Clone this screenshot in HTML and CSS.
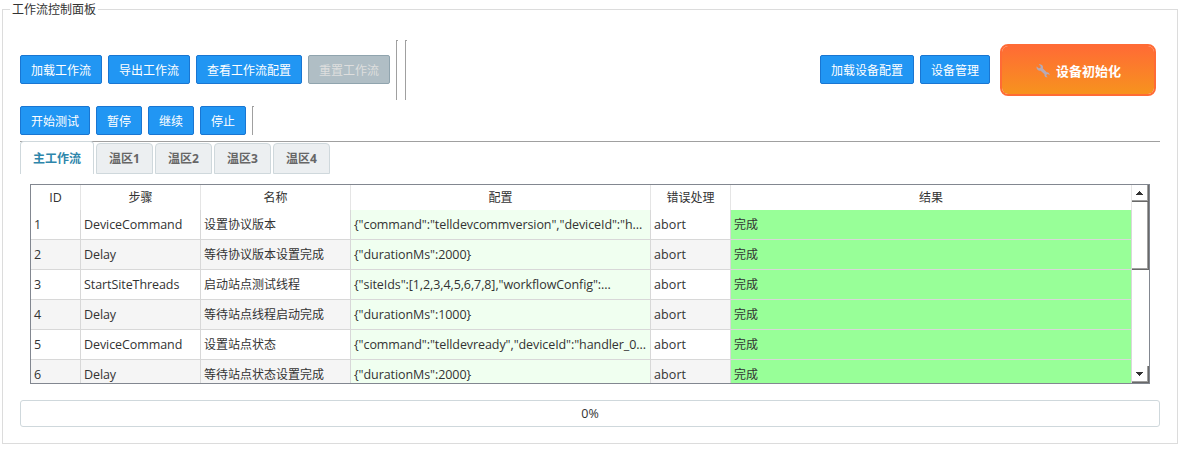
FILE: index.html
```html
<!DOCTYPE html>
<html lang="zh-CN">
<head>
<meta charset="utf-8">
<title>工作流控制面板</title>
<link rel="stylesheet" href="styles.css">
</head>
<body>
<section class="panel">
  <h1 class="panel-title">工作流控制面板</h1>
  <div class="toolbar toolbar-main">
    <button class="btn">加载工作流</button>
    <button class="btn">导出工作流</button>
    <button class="btn">查看工作流配置</button>
    <button class="btn" disabled>重置工作流</button>
    <i class="sep"></i><i class="sep sep-next"></i>
    <div class="device-actions">
      <button class="btn">加载设备配置</button>
      <button class="btn">设备管理</button>
      <button class="init-btn"><svg class="wrench" viewBox="0 0 14 14"><path d="M.6 2.5 2.7 4.3 4.5 3.9 4.6 2.1 2.7.5C4.5-.1 6.8 1 7 3.1L6.9 4.6 10.7 8.2C12.3 7.9 13.9 9.3 13.5 11.3L12 10 10.6 10.4 10.3 11.8 11.7 13.3C9.6 13.7 8.1 12.2 8.5 10.3L4.7 6.7C2.5 7.3.1 5.2.6 2.5Z"/></svg>设备初始化</button>
    </div>
  </div>
  <div class="toolbar toolbar-run">
    <button class="btn">开始测试</button>
    <button class="btn">暂停</button>
    <button class="btn">继续</button>
    <button class="btn">停止</button>
    <i class="sep"></i>
  </div>
  <nav class="tabs">
    <span class="tab active">主工作流</span>
    <span class="tab">温区1</span>
    <span class="tab">温区2</span>
    <span class="tab">温区3</span>
    <span class="tab">温区4</span>
  </nav>
  <div class="grid">
    <div class="grid-view">
      <table>
        <colgroup><col class="c-id"><col class="c-step"><col class="c-name"><col class="c-config"><col class="c-error"><col class="c-result"></colgroup>
        <thead><tr><th class="latin">ID</th><th>步骤</th><th>名称</th><th>配置</th><th>错误处理</th><th>结果</th></tr></thead>
        <tbody>
          <tr><td>1</td><td>DeviceCommand</td><td>设置协议版本</td><td class="config">{"command":"telldevcommversion","deviceId":"h...</td><td>abort</td><td class="done">完成</td></tr>
          <tr><td>2</td><td>Delay</td><td>等待协议版本设置完成</td><td class="config">{"durationMs":2000}</td><td>abort</td><td class="done">完成</td></tr>
          <tr><td>3</td><td>StartSiteThreads</td><td>启动站点测试线程</td><td class="config">{"siteIds":[1,2,3,4,5,6,7,8],"workflowConfig":...</td><td>abort</td><td class="done">完成</td></tr>
          <tr><td>4</td><td>Delay</td><td>等待站点线程启动完成</td><td class="config">{"durationMs":1000}</td><td>abort</td><td class="done">完成</td></tr>
          <tr><td>5</td><td>DeviceCommand</td><td>设置站点状态</td><td class="config">{"command":"telldevready","deviceId":"handler_0...</td><td>abort</td><td class="done">完成</td></tr>
          <tr><td>6</td><td>Delay</td><td>等待站点状态设置完成</td><td class="config">{"durationMs":2000}</td><td>abort</td><td class="done">完成</td></tr>
        </tbody>
      </table>
    </div>
    <div class="scrollbar">
      <div class="scroll-part arrow"><svg viewBox="0 0 7 4" shape-rendering="crispEdges"><path d="M3 0h1v1h1v1h1v1h1v1H0V3h1V2h1V1h1z"/></svg></div>
      <div class="scroll-part thumb"></div>
      <div class="track"></div>
      <div class="scroll-part arrow arrow-down"><svg viewBox="0 0 7 4" shape-rendering="crispEdges"><path d="M0 0h7v1H6v1H5v1H4v1H3V3H2V2H1V1H0z"/></svg></div>
    </div>
  </div>
  <div class="progress">0%</div>
</section>
</body>
</html>
```
FILE: styles.css
```css
* { box-sizing: border-box; }

body {
  margin: 0;
  padding: 9px 5px 0 2px;
  background: #fff;
  color: #333;
  font: 12px/16px "Open Sans", "Noto Sans CJK SC", sans-serif;
}

.panel {
  display: flex;
  flex-direction: column;
  height: 435px;
  padding: 0 17px;
  border: 1px solid #dcdcdc;
}

.panel-title {
  align-self: flex-start;
  height: 16px;
  margin: -8px 0 22px -10px;
  padding: 0 2px;
  background: #fff;
  font-size: 12px;
  font-weight: 400;
}

.toolbar { display: flex; gap: 6px; }
.toolbar-main { height: 60px; align-items: center; }
.toolbar-main .btn { margin-bottom: 1px; }
.toolbar-run { height: 29px; margin-top: 6px; }

.btn {
  height: 29px;
  padding: 2px 10px 0;
  border: 1px solid #1976d2;
  border-radius: 2px;
  background: #2196f3;
  color: #fff;
  font: inherit;
  white-space: nowrap;
}
.btn:disabled { border-color: #90a4ae; background: #b0bec5; color: #dedede; }

.sep { width: 2px; align-self: stretch; border-top: 1px solid #a0a0a0; border-left: 1px solid #a0a0a0; }
.sep-next { margin-left: 1px; }

.device-actions { display: flex; align-items: center; gap: 6px; margin: 0 4px 0 auto; }

.init-btn {
  display: flex;
  align-items: center;
  justify-content: center;
  gap: 6px;
  width: 156px;
  height: 52px;
  margin-left: 4px;
  padding: 1px 0 0 1px;
  border: 2px solid #ff6b35;
  border-radius: 8px;
  background: linear-gradient(#ff6b35, #f7931e) padding-box;
  color: #fff;
  font: bold 13px/18px "Open Sans", "Noto Sans CJK SC", sans-serif;
}
.wrench { width: 14px; height: 14px; fill: #b5aab8; }

.tabs {
  display: flex;
  align-items: flex-end;
  gap: 2px;
  height: 33px;
  margin-top: 6px;
  background: linear-gradient(#a0a0a0, #a0a0a0) 0 0 / 100% 1px no-repeat;
}
.tab {
  width: 57px;
  height: 31px;
  border: 1px solid #cfd8dc;
  border-radius: 4px 4px 0 0;
  background: #eceff1;
  color: #666;
  font-weight: 700;
  line-height: 29px;
  text-align: center;
}
.tab.active {
  width: 74px;
  height: 33px;
  border-bottom: 0;
  background: #fff;
  color: #2e86ab;
  line-height: 33px;
}

.grid {
  display: flex;
  height: 200px;
  margin: 10px 10px 0;
  border: 1px solid #828790;
}
.grid-view { flex: 1; overflow: hidden; }

table { width: 1101px; table-layout: fixed; border-collapse: separate; border-spacing: 0; }
.c-id { width: 50px; }
.c-step { width: 120px; }
.c-name { width: 150px; }
.c-config { width: 300px; }
.c-error { width: 80px; }
.c-result { width: 401px; }

th { height: 25px; padding: 0; border-right: 1px solid #e5e5e5; font-weight: 400; }
th.latin { font-size: 12.5px; }
td {
  height: 30px;
  padding: 1px 0 0 3px;
  overflow: hidden;
  border-right: 1px solid #d8d8d8;
  border-bottom: 1px solid #d8d8d8;
  font-size: 12.5px;
  letter-spacing: -0.08px;
  white-space: nowrap;
}
td:nth-child(3), td.done { font-size: 12px; letter-spacing: 0; }
td:nth-child(5) { letter-spacing: 0.1px; }
tbody tr:nth-child(even) { background: #f5f5f5; }
td.config { background: #f0fff0; }
td.done { background: #98ff98; }

.scrollbar { display: flex; flex-direction: column; width: 17px; }
.scroll-part {
  border-right: 1px solid #696969;
  border-bottom: 1px solid #696969;
  box-shadow: inset -1px -1px #a0a0a0;
}
.arrow { display: flex; align-items: center; justify-content: center; height: 17px; padding-right: 1px; }
.arrow svg { width: 7px; height: 4px; fill: #333; }
.thumb { height: 68px; }
.track { flex: 1; }

.progress {
  height: 27px;
  margin-top: 16px;
  border: 1px solid #cfd8dc;
  border-radius: 3px;
  font-size: 12.5px;
  line-height: 25px;
  text-align: center;
}
```
